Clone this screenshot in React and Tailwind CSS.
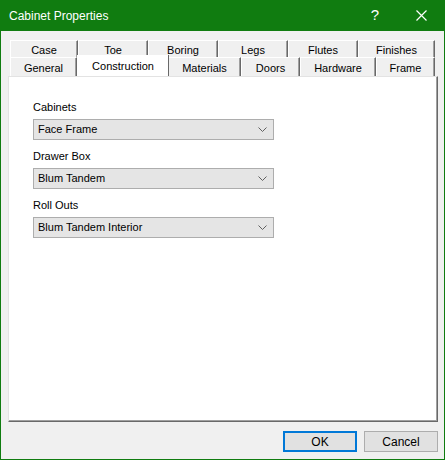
const backTabs = [
  { label: "Case", w: 68 },
  { label: "Toe", w: 70 },
  { label: "Boring", w: 70 },
  { label: "Legs", w: 70 },
  { label: "Flutes", w: 70 },
  { label: "Finishes", w: 77 },
];

const frontTabs = [
  { label: "General", w: 67 },
  { label: "Construction", w: 91, active: true },
  { label: "Materials", w: 73 },
  { label: "Doors", w: 59 },
  { label: "Hardware", w: 76 },
  { label: "Frame", w: 59 },
];

const fields = [
  { label: "Cabinets", value: "Face Frame" },
  { label: "Drawer Box", value: "Blum Tandem" },
  { label: "Roll Outs", value: "Blum Tandem Interior" },
];

const Tab = ({ label, w, active }) =>
  active ? (
    <div
      style={{ width: w }}
      className="relative -top-[2px] z-10 h-[21px] shrink-0 bg-white border-l border-t border-white shadow-[1px_0_0_#696969] flex items-start justify-center pt-[2px]"
    >
      {label}
    </div>
  ) : (
    <div
      style={{ width: w }}
      className="h-full shrink-0 bg-[#f0f0f0] border-l border-t border-white border-r border-r-[#696969] shadow-[inset_-1px_0_0_#a0a0a0] flex items-center justify-center pt-[2px]"
    >
      {label}
    </div>
  );

const Combo = ({ label, value }) => (
  <div className="flex flex-col">
    <div className="h-[15px] leading-[15px] mb-[4px]">{label}</div>
    <div className="w-[241px] h-[21px] bg-[#e5e5e5] border border-[#adadad] flex items-center justify-between pl-[4px] pr-[6px]">
      <span>{value}</span>
      <svg width="9" height="5" viewBox="0 0 9 5">
        <path d="M0.5 0.5 L4.5 4.5 L8.5 0.5" fill="none" stroke="#606060" strokeWidth="1" />
      </svg>
    </div>
  </div>
);

const App = () => {
  return (
    <div
      className="w-[445px] h-[460px] bg-[#107c10] px-px pb-px flex flex-col text-[11px] text-black"
      style={{ fontFamily: '"Liberation Sans", Arial, sans-serif' }}
    >
      <div className="h-[31px] shrink-0 flex items-center text-white text-[12px] pl-[8px]">
        <span className="flex-1">Cabinet Properties</span>
        <span className="text-[15px] w-[46px] text-center">?</span>
        <span className="w-[46px] flex justify-center">
          <svg width="11" height="11" viewBox="0 0 11 11">
            <path d="M0.5 0.5 L10.5 10.5 M10.5 0.5 L0.5 10.5" stroke="white" strokeWidth="1.2" />
          </svg>
        </span>
      </div>

      <div className="flex-1 bg-[#f0f0f0] flex flex-col pt-[9px] px-[7px]">
        <div className="ml-[2px] flex h-[17px]">
          {backTabs.map((t) => (
            <Tab key={t.label} {...t} />
          ))}
        </div>
        <div className="ml-[2px] flex h-[19px]">
          {frontTabs.map((t) => (
            <Tab key={t.label} {...t} />
          ))}
        </div>

        <div className="h-[346px] w-[430px] bg-white border-l border-t border-[#e3e3e3] border-r border-b border-r-[#696969] border-b-[#696969] shadow-[inset_-1px_-1px_0_#a0a0a0] pl-[24px] pt-[23px] flex flex-col gap-[9px]">
          {fields.map((f) => (
            <Combo key={f.label} {...f} />
          ))}
        </div>

        <div className="flex justify-end gap-[7px] mt-[9px]">
          <button className="w-[74px] h-[21px] bg-[#e1e1e1] border-2 border-[#0078d7] text-[12px] leading-none">
            OK
          </button>
          <button className="w-[74px] h-[21px] bg-[#e1e1e1] border border-[#adadad] text-[12px] leading-none -mr-px">
            Cancel
          </button>
        </div>
      </div>
    </div>
  );
};

export default App;
